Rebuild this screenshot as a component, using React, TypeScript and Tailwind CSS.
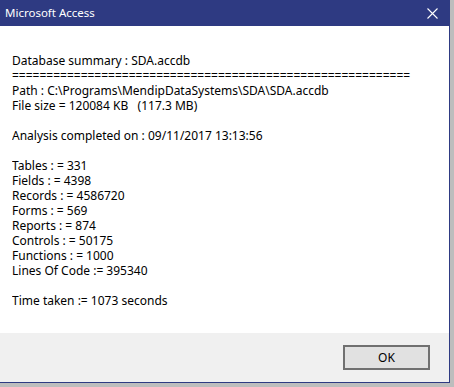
import React from "react";

const lines: string[] = [
  "Database summary : SDA.accdb",
  "==========================================================",
  "Path : C:\\Programs\\MendipDataSystems\\SDA\\SDA.accdb",
  "File size = 120084 KB   (117.3 MB)",
  "",
  "Analysis completed on : 09/11/2017 13:13:56",
  "",
  "Tables : = 331",
  "Fields : = 4398",
  "Records : = 4586720",
  "Forms : = 569",
  "Reports : = 874",
  "Controls : = 50175",
  "Functions : = 1000",
  "Lines Of Code := 395340",
  "",
  "Time taken := 1073 seconds",
];

export default function App() {
  return (
    <div
      className="w-[454px] h-[387px] bg-[#bdbdbd] overflow-hidden"
      style={{ fontFamily: '"Noto Sans", "Liberation Sans", Arial, sans-serif' }}
    >
      <div className="w-[450px] h-[383px] flex flex-col border-r border-b border-[#2e3a82] bg-white">
        <div className="h-[26px] bg-[#2e3a82] flex items-center justify-between pl-[5px] pr-[11px] shrink-0">
          <span className="text-white text-[11.5px] leading-none">Microsoft Access</span>
          <svg width="11" height="11" viewBox="0 0 11 11">
            <path d="M0.5 0.5 L10.5 10.5 M10.5 0.5 L0.5 10.5" stroke="white" strokeWidth="1.1" fill="none" />
          </svg>
        </div>
        <div className="flex-1 bg-white pt-[27px] pl-[12px] text-black text-[12px] leading-[15px]">
          {lines.map((l, i) => (
            <div key={i} className="h-[15px] leading-[15px] whitespace-pre overflow-hidden">
              {l}
            </div>
          ))}
        </div>
        <div className="h-[49px] bg-[#f0f0f0] flex justify-end items-start pt-[12px] pr-[19px] shrink-0">
          <button className="w-[87px] h-[25px] border-2 border-[#707070] bg-[#e1e1e1] text-[12px] text-black flex items-center justify-center">
            OK
          </button>
        </div>
      </div>
    </div>
  );
}
